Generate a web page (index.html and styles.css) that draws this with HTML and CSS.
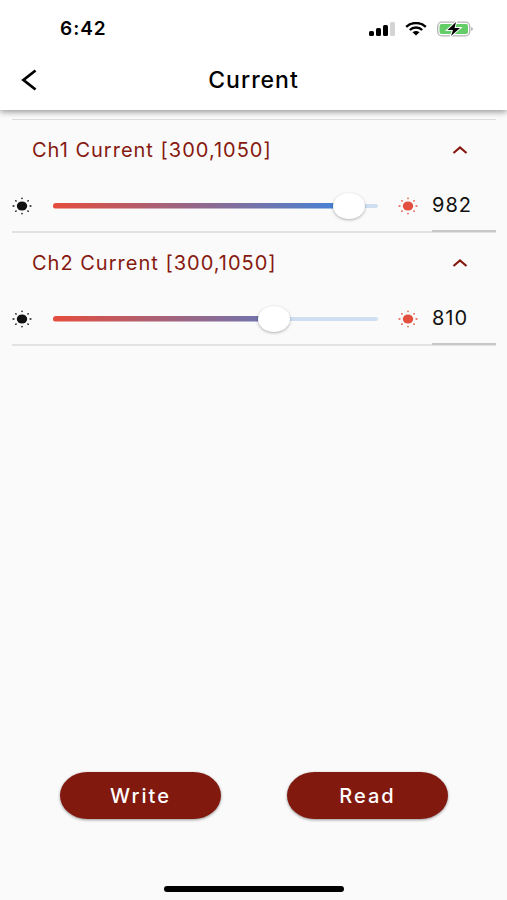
FILE: index.html
```html
<!DOCTYPE html>
<html lang="en">
<head>
<meta charset="UTF-8">
<meta name="viewport" content="width=device-width, initial-scale=1.0">
<title>Current</title>
<link rel="stylesheet" href="styles.css">
</head>
<body>

<svg class="sprite" aria-hidden="true">
    <symbol id="sun" viewBox="0 0 20 18">
        <ellipse cx="10" cy="9" rx="5.2" ry="4.6"/>
        <g fill="none" stroke="currentColor" stroke-width="1.5" stroke-linecap="round">
            <path d="M10 1.200v.4M10 16.400v.4M1.100 9h.8M18.100 9h.8M3.800 3.700l.3.300M15.900 14l.3.300M3.800 14.300l.3-.3M15.900 4l.3-.3"/>
        </g>
    </symbol>
    <symbol id="chevron" viewBox="0 0 16 10">
        <path d="M1.500 8L8 2.500 14.500 8" fill="none" stroke="currentColor" stroke-width="2.200"/>
    </symbol>
</svg>

<div class="app">
    <header>
        <div class="status-bar">
            <span class="time">6:42</span>
            <div class="status-icons">
                <svg width="26" height="14" viewBox="0 0 26 14">
                    <rect x="0" y="9" width="5" height="5" rx="1.5"/>
                    <rect x="7" y="6" width="5" height="8" rx="1.5"/>
                    <rect x="14" y="3" width="5" height="11" rx="1.5"/>
                    <rect x="21" y="0" width="5" height="14" rx="1.5" fill="#d4d4d4"/>
                </svg>
                <svg width="22" height="14" viewBox="0 0 22 14">
                    <path d="M1.2 4.8C6.5-.2 15.500-.2 20.800 4.800M4.800 8C8.200 4.700 13.800 4.700 17.200 8" fill="none" stroke="#000" stroke-width="2.400"/>
                    <path d="M7.500 10.300Q11 7.600 14.500 10.300L11 13.500z"/>
                </svg>
                <svg width="36" height="16" viewBox="0 0 36 16">
                    <rect x=".7" y="1.200" width="32" height="13.600" rx="4" fill="#fff" stroke="#b5b5b5" stroke-width="1.300"/>
                    <rect x="2.500" y="3" width="28.500" height="10" rx="2" fill="#65cd68"/>
                    <path d="M34.300 6v4q1.400-.5 1.400-2t-1.400-2z" fill="#9a9a9a"/>
                    <path d="M19 1l-8.500 8h5.500l-2 6L23 7h-5.500z" stroke="#fff" stroke-width="2" paint-order="stroke"/>
                </svg>
            </div>
        </div>
        <div class="nav-bar">
            <button class="back" aria-label="Back">
                <svg width="16" height="22" viewBox="0 0 16 22">
                    <path d="M14.500 1.500L2.500 11l12 9.500" fill="none" stroke="currentColor" stroke-width="2.800"/>
                </svg>
            </button>
            <h1>Current</h1>
        </div>
    </header>

    <main>
        <section class="channel">
            <button class="channel-head" aria-expanded="true">
                <span>Ch1 Current [300,1050]</span>
                <svg class="chevron"><use href="#chevron"/></svg>
            </button>
            <div class="channel-body">
                <svg class="sun"><use href="#sun"/></svg>
                <div class="slider" style="--fill: 90.9%">
                    <div class="track"></div>
                    <div class="fill"></div>
                    <input type="range" min="300" max="1050" value="982" aria-label="Ch1 Current">
                </div>
                <svg class="sun sun-max"><use href="#sun"/></svg>
                <input class="value" type="text" inputmode="numeric" value="982" aria-label="Ch1 Current value">
            </div>
        </section>

        <section class="channel">
            <button class="channel-head" aria-expanded="true">
                <span>Ch2 Current [300,1050]</span>
                <svg class="chevron"><use href="#chevron"/></svg>
            </button>
            <div class="channel-body">
                <svg class="sun"><use href="#sun"/></svg>
                <div class="slider" style="--fill: 68%">
                    <div class="track"></div>
                    <div class="fill"></div>
                    <input type="range" min="300" max="1050" value="810" aria-label="Ch2 Current">
                </div>
                <svg class="sun sun-max"><use href="#sun"/></svg>
                <input class="value" type="text" inputmode="numeric" value="810" aria-label="Ch2 Current value">
            </div>
        </section>
    </main>

    <footer>
        <div class="actions">
            <button class="action">Write</button>
            <button class="action">Read</button>
        </div>
        <div class="home-bar"></div>
    </footer>
</div>

<script>
    document.querySelectorAll('.channel').forEach((channel) => {
        const slider = channel.querySelector('.slider');
        const range = slider.querySelector('input');
        const value = channel.querySelector('.value');

        function updateFill() {
            const percent = (range.value - range.min) / (range.max - range.min) * 100;
            slider.style.setProperty('--fill', `${percent}%`);
        }

        range.addEventListener('input', () => {
            value.value = range.value;
            updateFill();
        });

        value.addEventListener('change', () => {
            range.value = value.value;
            value.value = range.value;
            updateFill();
        });
    });
</script>

</body>
</html>
```
FILE: styles.css
```css
* {
    box-sizing: border-box;
}

body {
    margin: 0;
    background-color: #fafafa;
    color: #000;
    font-family: Inter, "Liberation Sans", sans-serif;
}

button {
    border: none;
    background: none;
    padding: 0;
    color: inherit;
    font-family: inherit;
    cursor: pointer;
}

svg {
    display: block;
    flex: none;
}

.sprite {
    position: absolute;
    width: 0;
    height: 0;
}

.app {
    display: flex;
    flex-direction: column;
    min-height: 100vh;
}

/* Header */
header {
    position: relative;
    background-color: #fff;
    box-shadow: 0 2px 6px rgba(0, 0, 0, 0.4);
}

.status-bar {
    display: flex;
    justify-content: space-between;
    align-items: center;
    height: 50px;
    padding: 7px 34px 0 60px;
}

.time {
    font-size: 19px;
    font-weight: 600;
    letter-spacing: 1px;
}

.status-icons {
    display: flex;
    align-items: center;
    gap: 10px;
}

.nav-bar {
    display: grid;
    grid-template-columns: 40px 1fr 40px;
    align-items: center;
    height: 60px;
    padding: 0 21px;
}

h1 {
    margin: 0;
    font-size: 23px;
    font-weight: 500;
    letter-spacing: 1px;
    text-align: center;
}

/* Channels */
main {
    flex: 1;
    margin: 9px 11px 0 12px;
    border-top: 1px solid #dcdcdc;
}

.channel {
    border-bottom: 2px solid #e2e2e2;
}

.channel-head {
    display: flex;
    justify-content: space-between;
    align-items: center;
    width: 100%;
    height: 60px;
    padding: 0 28px 0 20px;
    color: #86190f;
    font-size: 20px;
    letter-spacing: 1px;
}

.chevron {
    width: 16px;
    height: 10px;
}

.channel-body {
    display: flex;
    align-items: center;
    height: 51px;
}

.sun {
    width: 20px;
    height: 18px;
    color: #111;
    fill: currentColor;
}

.sun-max {
    color: #e4503f;
}

/* The thumb may hang half its width over either end of the track */
.slider {
    flex: 1;
    display: grid;
    align-items: center;
    margin: 0 4px 0 5px;
}

.slider > * {
    grid-area: 1 / 1;
}

.track,
.fill {
    margin: 0 16px;
    border-radius: 3px;
}

.track {
    height: 4px;
    background-color: #cfdff1;
}

.fill {
    height: 6px;
    background-image: linear-gradient(to right, #e54d3c, #4a80d2 85%);
    clip-path: inset(0 calc(100% - var(--fill)) 0 0);
}

.slider input {
    appearance: none;
    z-index: 1;
    width: 100%;
    height: 32px;
    margin: 0;
    background: none;
    cursor: pointer;
}

.slider input::-webkit-slider-thumb {
    appearance: none;
    width: 32px;
    height: 26px;
    border-radius: 50%;
    background-color: #fff;
    box-shadow: 0 1px 3px rgba(0, 0, 0, 0.3);
}

.value {
    height: 52px;
    width: 64px;
    margin-left: 14px;
    padding: 0;
    border: none;
    border-bottom: 2px solid #c8c8c8;
    border-radius: 0;
    background: none;
    color: #111;
    font-family: inherit;
    font-size: 20px;
    letter-spacing: 1px;
}

/* Footer */
footer {
    padding-bottom: 8px;
}

.actions {
    display: flex;
    justify-content: space-between;
    gap: 66px;
    padding: 0 59px 0 60px;
}

.action {
    flex: 1;
    height: 47px;
    border-radius: 28px / 24px;
    background-color: #82190f;
    box-shadow: 0 1px 3px rgba(0, 0, 0, 0.4);
    color: #fff;
    font-size: 20px;
    font-weight: 500;
    letter-spacing: 2px;
}

.home-bar {
    width: 180px;
    height: 6px;
    margin: 67px auto 0;
    border-radius: 3px;
    background-color: #000;
}
```
